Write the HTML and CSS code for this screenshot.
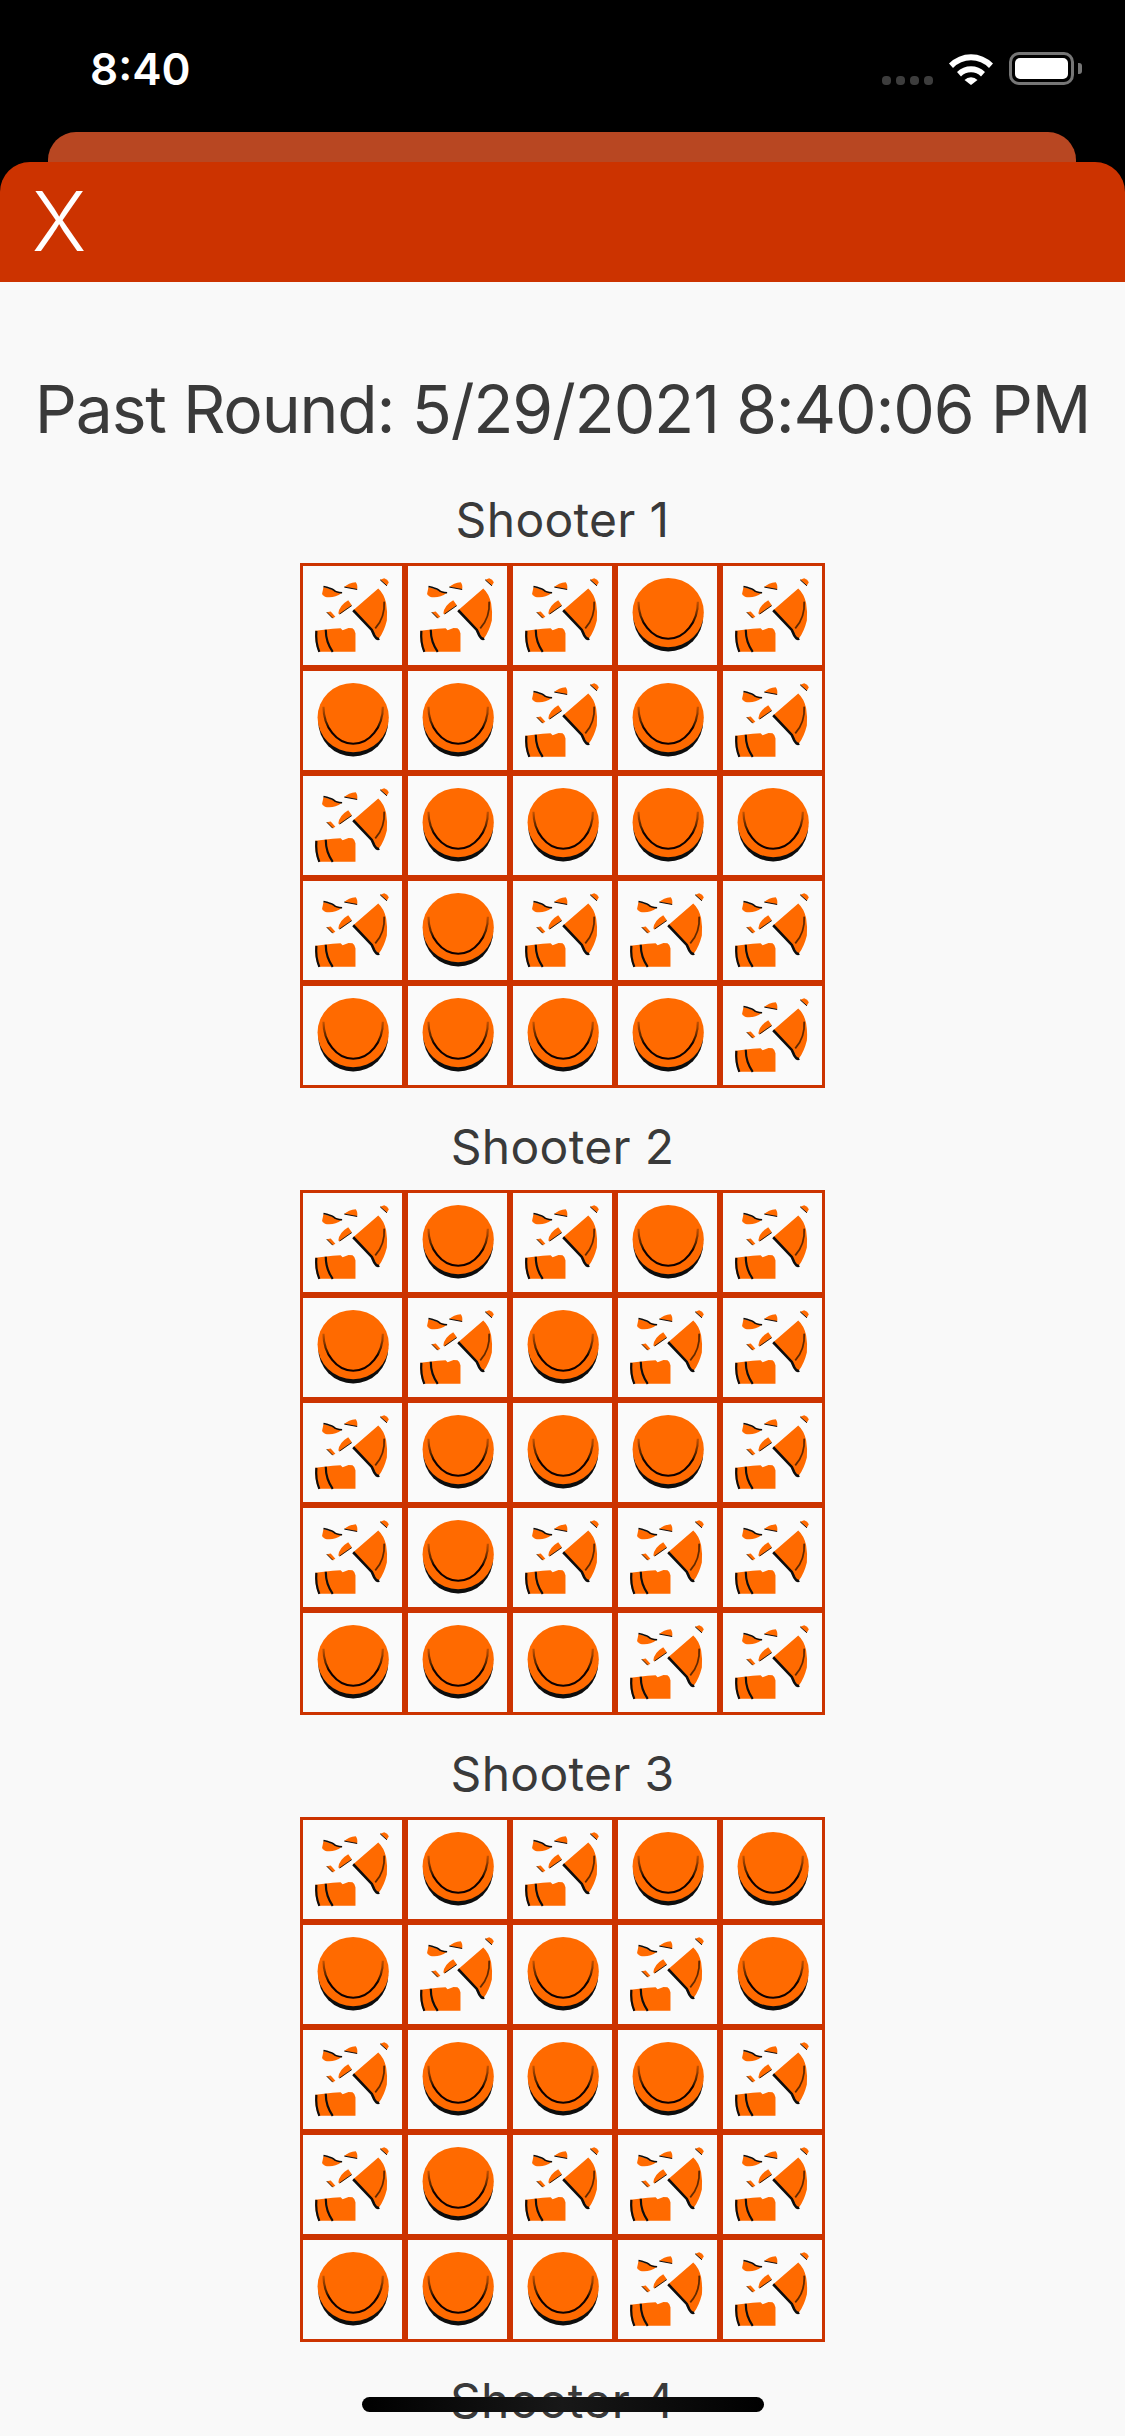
FILE: index.html
```html
<!DOCTYPE html>
<html lang="en">

<head>
    <meta charset="UTF-8">
    <meta name="viewport" content="width=device-width, initial-scale=1.0">
    <title>Past Round</title>
    <link rel="stylesheet" href="styles.css">
</head>

<body>
    <!-- Clay pigeon pictures, reused by every score cell -->
    <svg class="defs" width="0" height="0">
        <defs>
            <filter id="crisp" x="-5%" y="-5%" width="110%" height="110%">
                <feGaussianBlur stdDeviation="0.25" />
            </filter>
            <filter id="soft" x="-10%" y="-10%" width="120%" height="120%">
                <feGaussianBlur stdDeviation="0.55" />
            </filter>
            <filter id="softer" x="-10%" y="-10%" width="120%" height="120%">
                <feGaussianBlur stdDeviation="0.8" />
            </filter>
            <linearGradient id="ringFade" gradientUnits="userSpaceOnUse" x1="0" y1="26" x2="0" y2="58">
                <stop offset="0" stop-color="#5a2800" stop-opacity="0" />
                <stop offset="1" stop-color="#0c0500" stop-opacity="1" />
            </linearGradient>
            <symbol id="whole" viewBox="0 0 100 100">
                <circle cx="50.7" cy="51" r="35.3" fill="#0c0c0c" filter="url(#softer)" />
                <ellipse cx="50.7" cy="47" rx="36" ry="35" fill="#ff6a00" filter="url(#crisp)" />
                <path d="M20.7 36A30 37.5 0 0 0 80.7 36" fill="none" stroke="url(#ringFade)" stroke-width="2.2" filter="url(#soft)" />
            </symbol>
            <symbol id="broken" viewBox="0 0 100 100">
                <g filter="url(#crisp)">
                    <path d="M50.7 44.7L76 22.7Q82 28 84 38Q85.5 47 84.7 55Q82 66 76.7 73.3Q73.5 73 71 66Z" fill="#ff6a00" />
                    <path d="M50.7 44.7L69.5 64.5L72 70Q74.5 74.5 77 73.3" fill="none" stroke="#0c0c0c" stroke-width="2.6" />
                    <path d="M78 14L82 12.3Q85.5 13.5 86.7 16.3L84.7 20Z" fill="#ff6a00" />
                    <path d="M78 14L84.7 20" fill="none" stroke="#0c0c0c" stroke-width="1" />
                    <path d="M41.7 21.3Q46 17 53.3 16.3Q55.5 19 54.7 23.7Z" fill="#ff6a00" />
                    <path d="M41.7 21.3L54.7 23.7" fill="none" stroke="#0c0c0c" stroke-width="1" />
                    <path d="M20.7 21.3L30 24L39 27.3Q32 32.5 24 31.5Q20 30.5 19.3 28Z" fill="#ff6a00" />
                    <path d="M20.7 20.8Q28 22.5 31 24.2Q33 26.5 39.5 27" fill="none" stroke="#0c0c0c" stroke-width="1.6" />
                    <path d="M35.7 48Q36.5 40 45.7 34.7L49.3 39.7L37.3 48.7Z" fill="#ff6a00" />
                    <path d="M37 48.5L49.3 40" fill="none" stroke="#0c0c0c" stroke-width="0.9" />
                    <path d="M24 46.7L28 46L32.7 51.3L30 52.7Z" fill="#ff6a00" />
                    <path d="M24 46.7L30 52.7" fill="none" stroke="#0c0c0c" stroke-width="0.9" />
                    <path d="M12.5 65.5L30 63.5L38 63L40 65L46 62.7L50 63Q53 65 53 68V86.7H15.5Q11.5 76 12.5 65.5Z" fill="#ff6a00" />
                    <path d="M13.5 65.5Q12.5 77 16.5 86.7" fill="none" stroke="#0c0c0c" stroke-width="2.2" />
                    <path d="M23 64.5Q23 77 30 86.7" fill="none" stroke="#0c0c0c" stroke-width="2.2" />
                </g>
                <path d="M82 36Q83 52 73 63" fill="none" stroke="#3a1800" stroke-width="1.8" stroke-opacity="0.8" filter="url(#soft)" />
            </symbol>
        </defs>
    </svg>

    <div class="status-bar">
        <span class="clock">8:40</span>
        <div class="status-icons">
            <div class="signal"><i></i><i></i><i></i><i></i></div>
            <svg class="wifi" viewBox="0 0 46 33">
                <path d="M1 11.5A31 31 0 0 1 45 11.5L41 16A25 25 0 0 0 5 16Z" fill="#fff" />
                <path d="M9 20A20 20 0 0 1 37 20L33 24.5A14 14 0 0 0 13 24.5Z" fill="#fff" />
                <path d="M16.5 28A9 9 0 0 1 29.5 28L23 33Z" fill="#fff" />
            </svg>
            <div class="battery">
                <div class="battery-level"></div>
            </div>
            <div class="battery-nub"></div>
        </div>
    </div>

    <div class="back-sheet"></div>
    <header class="modal-header">
        <span class="close-btn">X</span>
    </header>

    <main class="content">
        <h1 class="round-title">Past Round: 5/29/2021 8:40:06 PM</h1>

        <h2 class="shooter-name">Shooter 1</h2>
        <div class="score-grid">
            <div class="cell"><svg><use href="#broken" /></svg></div>
            <div class="cell"><svg><use href="#broken" /></svg></div>
            <div class="cell"><svg><use href="#broken" /></svg></div>
            <div class="cell"><svg><use href="#whole" /></svg></div>
            <div class="cell"><svg><use href="#broken" /></svg></div>

            <div class="cell"><svg><use href="#whole" /></svg></div>
            <div class="cell"><svg><use href="#whole" /></svg></div>
            <div class="cell"><svg><use href="#broken" /></svg></div>
            <div class="cell"><svg><use href="#whole" /></svg></div>
            <div class="cell"><svg><use href="#broken" /></svg></div>

            <div class="cell"><svg><use href="#broken" /></svg></div>
            <div class="cell"><svg><use href="#whole" /></svg></div>
            <div class="cell"><svg><use href="#whole" /></svg></div>
            <div class="cell"><svg><use href="#whole" /></svg></div>
            <div class="cell"><svg><use href="#whole" /></svg></div>

            <div class="cell"><svg><use href="#broken" /></svg></div>
            <div class="cell"><svg><use href="#whole" /></svg></div>
            <div class="cell"><svg><use href="#broken" /></svg></div>
            <div class="cell"><svg><use href="#broken" /></svg></div>
            <div class="cell"><svg><use href="#broken" /></svg></div>

            <div class="cell"><svg><use href="#whole" /></svg></div>
            <div class="cell"><svg><use href="#whole" /></svg></div>
            <div class="cell"><svg><use href="#whole" /></svg></div>
            <div class="cell"><svg><use href="#whole" /></svg></div>
            <div class="cell"><svg><use href="#broken" /></svg></div>
        </div>

        <h2 class="shooter-name">Shooter 2</h2>
        <div class="score-grid">
            <div class="cell"><svg><use href="#broken" /></svg></div>
            <div class="cell"><svg><use href="#whole" /></svg></div>
            <div class="cell"><svg><use href="#broken" /></svg></div>
            <div class="cell"><svg><use href="#whole" /></svg></div>
            <div class="cell"><svg><use href="#broken" /></svg></div>

            <div class="cell"><svg><use href="#whole" /></svg></div>
            <div class="cell"><svg><use href="#broken" /></svg></div>
            <div class="cell"><svg><use href="#whole" /></svg></div>
            <div class="cell"><svg><use href="#broken" /></svg></div>
            <div class="cell"><svg><use href="#broken" /></svg></div>

            <div class="cell"><svg><use href="#broken" /></svg></div>
            <div class="cell"><svg><use href="#whole" /></svg></div>
            <div class="cell"><svg><use href="#whole" /></svg></div>
            <div class="cell"><svg><use href="#whole" /></svg></div>
            <div class="cell"><svg><use href="#broken" /></svg></div>

            <div class="cell"><svg><use href="#broken" /></svg></div>
            <div class="cell"><svg><use href="#whole" /></svg></div>
            <div class="cell"><svg><use href="#broken" /></svg></div>
            <div class="cell"><svg><use href="#broken" /></svg></div>
            <div class="cell"><svg><use href="#broken" /></svg></div>

            <div class="cell"><svg><use href="#whole" /></svg></div>
            <div class="cell"><svg><use href="#whole" /></svg></div>
            <div class="cell"><svg><use href="#whole" /></svg></div>
            <div class="cell"><svg><use href="#broken" /></svg></div>
            <div class="cell"><svg><use href="#broken" /></svg></div>
        </div>

        <h2 class="shooter-name">Shooter 3</h2>
        <div class="score-grid">
            <div class="cell"><svg><use href="#broken" /></svg></div>
            <div class="cell"><svg><use href="#whole" /></svg></div>
            <div class="cell"><svg><use href="#broken" /></svg></div>
            <div class="cell"><svg><use href="#whole" /></svg></div>
            <div class="cell"><svg><use href="#whole" /></svg></div>

            <div class="cell"><svg><use href="#whole" /></svg></div>
            <div class="cell"><svg><use href="#broken" /></svg></div>
            <div class="cell"><svg><use href="#whole" /></svg></div>
            <div class="cell"><svg><use href="#broken" /></svg></div>
            <div class="cell"><svg><use href="#whole" /></svg></div>

            <div class="cell"><svg><use href="#broken" /></svg></div>
            <div class="cell"><svg><use href="#whole" /></svg></div>
            <div class="cell"><svg><use href="#whole" /></svg></div>
            <div class="cell"><svg><use href="#whole" /></svg></div>
            <div class="cell"><svg><use href="#broken" /></svg></div>

            <div class="cell"><svg><use href="#broken" /></svg></div>
            <div class="cell"><svg><use href="#whole" /></svg></div>
            <div class="cell"><svg><use href="#broken" /></svg></div>
            <div class="cell"><svg><use href="#broken" /></svg></div>
            <div class="cell"><svg><use href="#broken" /></svg></div>

            <div class="cell"><svg><use href="#whole" /></svg></div>
            <div class="cell"><svg><use href="#whole" /></svg></div>
            <div class="cell"><svg><use href="#whole" /></svg></div>
            <div class="cell"><svg><use href="#broken" /></svg></div>
            <div class="cell"><svg><use href="#broken" /></svg></div>
        </div>

        <h2 class="shooter-name">Shooter 4</h2>
    </main>

    <div class="home-indicator"></div>
</body>

</html>
```
FILE: styles.css
```css
/* General styling */
html,
body {
    height: 2436px;
}

body {
    position: relative;
    margin: 0;
    overflow: hidden;
    background-color: #000;
    font-family: Inter, "Liberation Sans", sans-serif;
}

.defs {
    position: absolute;
}

/* Status bar */
.status-bar {
    display: flex;
    justify-content: space-between;
    height: 132px;
    box-sizing: border-box;
    padding: 43px 43px 0 90px;
    color: #fff;
}

.clock {
    font-size: 44px;
    font-weight: 600;
    line-height: 52px;
}

.status-icons {
    display: flex;
    align-items: flex-end;
    height: 33px;
    margin-top: 9px;
}

.signal {
    display: flex;
    gap: 5px;
    margin-right: 15px;
}

.signal i {
    width: 9px;
    height: 9px;
    border-radius: 4px;
    background-color: #3d3d3d;
}

.wifi {
    width: 46px;
    height: 33px;
    margin-right: 15px;
}

.battery {
    width: 65px;
    height: 33px;
    box-sizing: border-box;
    padding: 3px;
    border: 3px solid #767676;
    border-radius: 10px;
}

.battery-level {
    height: 100%;
    border-radius: 5px;
    background-color: #fff;
}

.battery-nub {
    align-self: center;
    width: 4px;
    height: 11px;
    margin-left: 4px;
    border-radius: 0 3px 3px 0;
    background-color: #767676;
}

/* Stacked modal sheets */
.back-sheet {
    height: 30px;
    margin: 0 49px 0 48px;
    border-radius: 28px 28px 0 0;
    background-color: #b84722;
}

.modal-header {
    display: flex;
    align-items: center;
    height: 120px;
    box-sizing: border-box;
    padding-left: 32px;
    border-radius: 30px 30px 0 0;
    background-color: #cc3300;
}

.close-btn {
    color: #fff;
    font-size: 82px;
    font-weight: 300;
    line-height: 90px;
}

/* Round content */
.content {
    height: 2154px;
    box-sizing: border-box;
    padding-top: 87px;
    background-color: #f9f9f9;
    color: #3a3a3a;
    text-align: center;
}

.round-title {
    margin: 0 0 12px;
    font-size: 66px;
    font-weight: 400;
    line-height: 80px;
    letter-spacing: -1.2px;
    white-space: nowrap;
}

.shooter-name {
    margin: 0;
    padding-top: 15px;
    font-size: 48px;
    font-weight: 400;
    line-height: 87px;
    letter-spacing: 0.3px;
}

.score-grid {
    display: grid;
    grid-template-columns: repeat(5, 105px);
    grid-auto-rows: 105px;
    justify-content: center;
}

.cell {
    box-sizing: border-box;
    border: 3px solid #cc3300;
    background-color: #fafafa;
}

.cell svg {
    display: block;
    width: 100%;
    height: 100%;
}

.home-indicator {
    position: absolute;
    left: 362px;
    top: 2397px;
    width: 402px;
    height: 15px;
    border-radius: 8px;
    background: linear-gradient(90deg, #000, #181818 50%, #000);
}
```
